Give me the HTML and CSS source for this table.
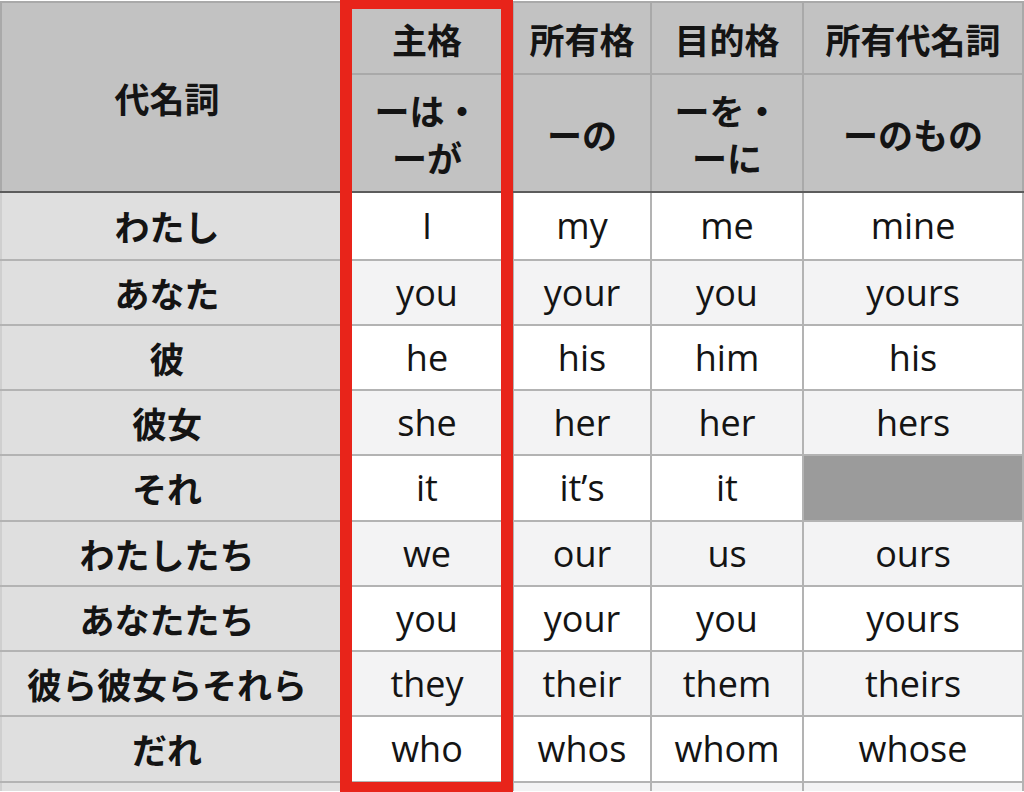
FILE: index.html
```html
<!DOCTYPE html>
<html lang="ja">
<head>
<meta charset="utf-8">
<link rel="stylesheet" href="styles.css">
</head>
<body>
<div class="page">
  <table class="pron">
    <colgroup>
      <col class="c1"><col class="c2"><col class="c3"><col class="c4"><col class="c5">
    </colgroup>
    <thead>
      <tr class="h1">
        <th rowspan="2" class="lead">代名詞</th>
        <th>主格</th>
        <th>所有格</th>
        <th>目的格</th>
        <th>所有代名詞</th>
      </tr>
      <tr class="h2">
        <th>ーは・<br>ーが</th>
        <th>ーの</th>
        <th>ーを・<br>ーに</th>
        <th>ーのもの</th>
      </tr>
    </thead>
    <tbody>
      <tr class="first"><th>わたし</th><td>I</td><td>my</td><td>me</td><td>mine</td></tr>
      <tr class="alt"><th>あなた</th><td>you</td><td>your</td><td>you</td><td>yours</td></tr>
      <tr><th>彼</th><td>he</td><td>his</td><td>him</td><td>his</td></tr>
      <tr class="alt"><th>彼女</th><td>she</td><td>her</td><td>her</td><td>hers</td></tr>
      <tr><th>それ</th><td>it</td><td>it’s</td><td>it</td><td class="empty"></td></tr>
      <tr class="alt"><th>わたしたち</th><td>we</td><td>our</td><td>us</td><td>ours</td></tr>
      <tr><th>あなたたち</th><td>you</td><td>your</td><td>you</td><td>yours</td></tr>
      <tr class="alt"><th>彼ら彼女らそれら</th><td>they</td><td>their</td><td>them</td><td>theirs</td></tr>
      <tr><th>だれ</th><td>who</td><td>whos</td><td>whom</td><td>whose</td></tr>
      <tr class="alt tail"><th></th><td></td><td></td><td></td><td></td></tr>
    </tbody>
  </table>
  <div class="highlight"></div>
</div>
</body>
</html>
```
FILE: styles.css
```css
html, body {
  margin: 0;
  padding: 0;
  background: #ffffff;
}
body {
  width: 1024px;
  height: 792px;
  overflow: hidden;
}
.page {
  position: relative;
  height: 792px;
  overflow: hidden;
  box-sizing: border-box;
  padding-top: 1px;
}
.pron {
  border-collapse: collapse;
  table-layout: fixed;
  width: 1022px;
  font-family: "Open Sans", "Noto Sans CJK JP", sans-serif;
  color: #141414;
}
.c1 { width: 340px; }
.c2 { width: 172px; }
.c3 { width: 138px; }
.c4 { width: 152px; }
.c5 { width: 220px; }

.pron th, .pron td {
  border: 2px solid #b3b3b3;
  text-align: center;
  vertical-align: middle;
  padding: 0;
}
.pron th {
  font-family: "Noto Sans CJK JP", sans-serif;
  font-weight: 700;
  font-size: 35px;
  line-height: 47px;
}
.pron td {
  font-size: 36px;
  font-weight: 400;
  background: #ffffff;
}
.pron thead th {
  background: #c2c2c2;
  border-color: #a9a9a9;
}
.pron thead tr.h2 th,
.pron thead th.lead {
  border-bottom: 2px solid #5c5c5c;
}
.pron thead th.lead,
.pron tbody th {
  padding-right: 8px;
}
.h1 { height: 72px; }
.h2 { height: 118px; }
.pron tbody tr { height: 65.25px; }
.pron tbody tr.first { height: 67.5px; }
.pron tbody tr.tail { height: 9px; }
.pron tbody tr.tail th,
.pron tbody tr.tail td {
  line-height: 0;
  font-size: 0;
  border-bottom: 0;
}
.pron tbody th {
  background: #dfdfdf;
  border-left-color: #cfcfcf;
}
.pron tbody tr.alt td {
  background: #f3f3f4;
}
.pron td.empty {
  background: #9b9b9b;
}
.highlight {
  position: absolute;
  left: 340px;
  top: -3px;
  width: 173px;
  height: 797px;
  box-sizing: border-box;
  border: 12px solid #e8241a;
}
```
